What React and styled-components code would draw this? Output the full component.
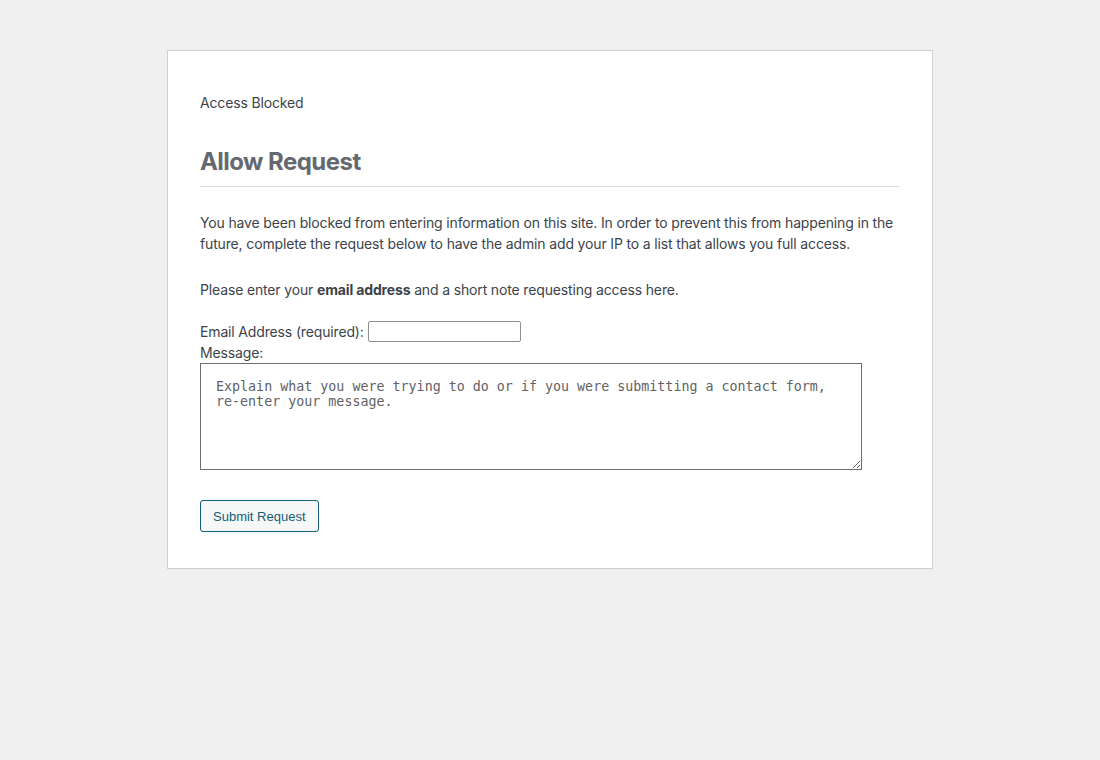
import React from "react";
import styled, { createGlobalStyle } from "styled-components";

const Global = createGlobalStyle`
  html, body { margin: 0; padding: 0; background: #f0f0f1; }
  body { font-family: Inter, "Noto Sans", sans-serif; color: #3c434a; }
`;

const Card = styled.div`
  box-sizing: border-box;
  width: 766px;
  margin: 50px auto 0;
  background: #fff;
  border: 1px solid #cfcfd1;
  padding: 41px 32px 36px;
`;

const Text = styled.p`
  margin: ${(p) => p.$mt || 0}px 0 0;
  font-size: 14px;
  line-height: 21px;
  letter-spacing: -0.15px;
  color: #3c434a;
`;

const Heading = styled.h1`
  margin: 33px 0 0;
  padding: 0 0 9px;
  font-size: 24px;
  line-height: 31px;
  font-weight: 700;
  color: #646970;
  border-bottom: 1px solid #dcdcde;
  letter-spacing: -0.55px;
`;

const Form = styled.form`
  display: flex;
  flex-direction: column;
  margin-top: 21px;
`;

const Row = styled.div`
  display: flex;
  align-items: center;
  gap: 4px;
`;

const Label = styled.label`
  font-size: 14px;
  line-height: 21px;
  letter-spacing: -0.15px;
  color: #3c434a;
`;

const EmailInput = styled.input`
  box-sizing: border-box;
  width: 153px;
  height: 21px;
  border: 1px solid #8c8f94;
  border-radius: 2px;
  padding: 0 4px;
  margin: 0;
  background: #fff;
`;

const TextArea = styled.textarea`
  box-sizing: border-box;
  width: 662px;
  height: 107px;
  border: 1px solid #6e6e70;
  border-radius: 0;
  padding: 15px 15px 14px;
  margin: 0;
  font-family: "DejaVu Sans Mono", monospace;
  font-size: 13.33px;
  line-height: 15px;
  color: #3c434a;
  display: block;
  &::placeholder { color: #5f6266; opacity: 1; }
`;

const Button = styled.button`
  align-self: flex-start;
  box-sizing: border-box;
  height: 32px;
  margin-top: 30px;
  padding: 0 12px;
  border: 1px solid #135e78;
  border-radius: 3px;
  background: #f6f7f7;
  color: #135e78;
  font-family: "Liberation Sans", Arial, sans-serif;
  font-size: 13px;
  cursor: pointer;
`;

export default function App() {
  return (
    <>
      <Global />
      <Card>
        <Text>Access Blocked</Text>
        <Heading>Allow Request</Heading>
        <Text $mt={25}>
          You have been blocked from entering information on this site. In order to prevent this from
          happening in the future, complete the request below to have the admin add your IP to a list
          that allows you full access.
        </Text>
        <Text $mt={25}>
          Please enter your <strong>email address</strong> and a short note requesting access here.
        </Text>
        <Form onSubmit={(e) => e.preventDefault()}>
          <Row>
            <Label htmlFor="email">Email Address (required):</Label>
            <EmailInput id="email" type="email" />
          </Row>
          <Label htmlFor="msg">Message:</Label>
          <TextArea
            id="msg"
            placeholder="Explain what you were trying to do or if you were submitting a contact form, re-enter your message."
          />
          <Button type="submit">Submit Request</Button>
        </Form>
      </Card>
    </>
  );
}
